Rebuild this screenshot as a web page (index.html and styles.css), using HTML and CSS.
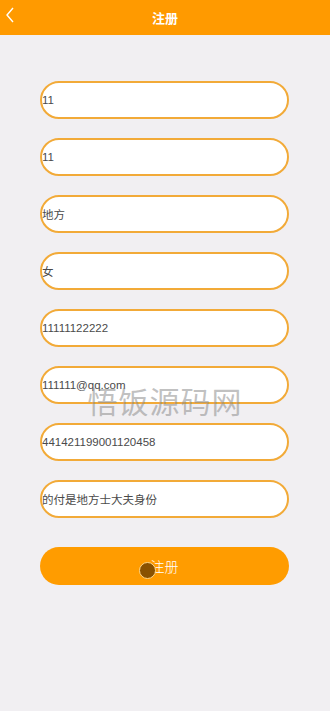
FILE: index.html
```html
<!DOCTYPE html>
<html lang="zh">
<head>
    <meta charset="UTF-8">
    <meta name="viewport" content="width=device-width, initial-scale=1.0">
    <title>注册</title>
    <link rel="stylesheet" href="styles.css">
</head>
<body>

<div class="header">
    <span class="back">
        <svg width="10" height="16" viewBox="0 0 10 16"><path d="M8 1 L2 8 L8 15" fill="none" stroke="#fff" stroke-width="1.4"/></svg>
    </span>
    <h1>注册</h1>
</div>

<div class="form">
    <input type="text" value="11">
    <input type="text" value="11">
    <input type="text" value="地方">
    <input type="text" value="女">
    <input type="text" value="11111122222">
    <input type="text" value="111111@qq.com">
    <input type="text" value="441421199001120458">
    <input type="text" value="的付是地方士大夫身份">

    <button class="btn-submit">注册<span class="touch"></span></button>
</div>

<div class="watermark">悟饭源码网</div>

</body>
</html>
```

FILE: styles.css
```css
body {
    margin: 0;
    background: #f1eff2;
    font-family: "Liberation Sans", "Noto Sans CJK SC", sans-serif;
    height: 711px;
    position: relative;
}
.header {
    height: 35px;
    background: #ff9a00;
    display: flex;
    align-items: center;
    justify-content: center;
    position: relative;
}
.header h1 {
    margin: 0;
    font-size: 13px;
    font-weight: bold;
    color: #fff;
}
.back {
    position: absolute;
    left: 5px;
    top: 7px;
}
.form {
    display: flex;
    flex-direction: column;
    padding: 46px 41px 0 40px;
    gap: 19px;
}
.form input {
    height: 38px;
    box-sizing: border-box;
    border: 2px solid #f2aa38;
    border-radius: 19px;
    background: #fff;
    padding: 0;
    font-size: 11.5px;
    font-family: "Liberation Sans", "Noto Sans CJK SC", sans-serif;
    color: #4a4a4a;
    outline: none;
}
.btn-submit {
    margin-top: 10px;
    height: 38px;
    border: none;
    border-radius: 19px;
    background: #ff9c00;
    color: #fff;
    font-size: 14px;
    font-weight: 300;
    font-family: "Noto Sans CJK SC", sans-serif;
    padding-left: 6px;
    position: relative;
}
.touch {
    position: absolute;
    left: 99px;
    top: 15px;
    width: 17px;
    height: 17px;
    border-radius: 50%;
    background: #8a5200;
    border: 1px solid #ffd88a;
    box-sizing: border-box;
}
.watermark {
    position: absolute;
    left: 0;
    right: 0;
    top: 378px;
    text-align: center;
    font-size: 30px;
    letter-spacing: 1px;
    color: rgba(140, 140, 140, 0.55);
    font-family: "Noto Sans CJK SC", serif;
    pointer-events: none;
}
```
